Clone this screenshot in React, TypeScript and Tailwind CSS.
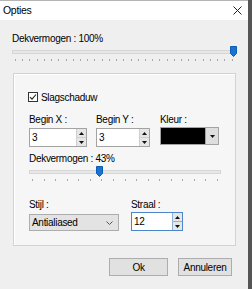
import React from "react";

function Thumb() {
  return (
    <svg width="7" height="11" viewBox="0 0 7 11" className="block">
      <path d="M0.5 0.5H6.5V7.5L3.5 10.5L0.5 7.5Z" fill="#1a73d1" stroke="#0b5cb3" strokeWidth="1" />
    </svg>
  );
}

function Ticks({ count }: { count: number }) {
  return (
    <div className="flex justify-between">
      {Array.from({ length: count }).map((_, i) => (
        <span key={i} className="block w-[1px] h-[2px] bg-[#a9a9a9]" />
      ))}
    </div>
  );
}

function Slider({ width, thumbLeft, ticks, tickPad }: { width: number; thumbLeft: number; ticks: number; tickPad: number }) {
  return (
    <div className="relative h-[17px]" style={{ width }}>
      <div className="mt-[3px] h-[4px] border border-[#d6d6d6] bg-[#e7e7e7]" />
      <div className="mt-[5px]" style={{ paddingLeft: tickPad, paddingRight: tickPad }}>
        <Ticks count={ticks} />
      </div>
      <div className="absolute top-[-1px]" style={{ left: thumbLeft }}>
        <Thumb />
      </div>
    </div>
  );
}

function SpinButtons({ bordered }: { bordered?: boolean }) {
  return (
    <div className={"flex flex-col w-[10px] h-full " + (bordered ? "border-l border-[#8fb2d8]" : "border-l border-[#cfcfcf]")}>
      <div className={"flex-1 flex items-center justify-center bg-[#e6e6e6] " + (bordered ? "border-b border-[#8fb2d8]" : "border-b border-[#cfcfcf]")}>
        <svg width="5" height="3" viewBox="0 0 5 3"><path d="M0 3L2.5 0L5 3Z" fill="#111" /></svg>
      </div>
      <div className="flex-1 flex items-center justify-center bg-[#e6e6e6]">
        <svg width="5" height="3" viewBox="0 0 5 3"><path d="M0 0L2.5 3L5 0Z" fill="#111" /></svg>
      </div>
    </div>
  );
}

function SpinInput({ value, width, focused }: { value: string; width: number; focused?: boolean }) {
  return (
    <div
      className={"flex h-[19px] bg-white border " + (focused ? "border-[#4a86c8]" : "border-[#a3a3a3]")}
      style={{ width }}
    >
      <div className="flex-1 pl-[2px] leading-[17px]">{value}</div>
      <SpinButtons bordered={focused} />
    </div>
  );
}

export default function App() {
  return (
    <div className="w-[252px] h-[289px] flex bg-[#efefef] border-r-[4px] border-[#555555] font-['Liberation_Sans',Arial,sans-serif] text-[10px] tracking-[-0.3px] text-black overflow-hidden">
      <div className="flex-1 flex flex-col">
        <div className="h-[20px] bg-white border-t border-[#b5b5b5] flex items-center justify-between pl-[3px] pr-[6px]">
          <span className="text-[10.5px]">Opties</span>
          <svg width="9" height="9" viewBox="0 0 9 9">
            <path d="M0.5 0.5L8.5 8.5M8.5 0.5L0.5 8.5" stroke="#222" strokeWidth="1" />
          </svg>
        </div>
        <div className="flex-1 flex flex-col pl-[12px] pt-[11px]">
          <div className="h-[16px] leading-[16px]">Dekvermogen : 100%</div>
          <Slider width={224} thumbLeft={218} ticks={31} tickPad={3} />
          <div className="mt-[9px] ml-[1px] w-[223px] h-[173px] border border-[#d3d3d3] bg-[#f6f6f6] shadow-[inset_1px_1px_0_#ffffff] pl-[15px] pt-[15px] flex flex-col">
            <div className="h-[16px] flex items-center ml-[-1px]">
              <div className="w-[10px] h-[10px] border border-[#333] bg-white flex items-center justify-center">
                <svg width="8" height="8" viewBox="0 0 8 8">
                  <path d="M1 4.2L3 6.2L7 1.5" fill="none" stroke="#222" strokeWidth="1.1" />
                </svg>
              </div>
              <span className="ml-[3px]">Slagschaduw</span>
            </div>
            <div className="mt-[7px] flex">
              <div className="flex flex-col w-[58px]">
                <div className="h-[16px] leading-[16px]">Begin X :</div>
                <SpinInput value="3" width={58} />
              </div>
              <div className="flex flex-col w-[54px] ml-[9px]">
                <div className="h-[16px] leading-[16px]">Begin Y :</div>
                <SpinInput value="3" width={54} />
              </div>
              <div className="flex flex-col w-[59px] ml-[10px]">
                <div className="h-[15px] leading-[15px]">Kleur :</div>
                <div className="flex h-[18px] border border-[#a3a3a3] bg-[#dedede]">
                  <div className="w-[45px] h-full bg-black border-r border-[#a3a3a3]" />
                  <div className="flex-1 flex items-center justify-center">
                    <svg width="5" height="3" viewBox="0 0 5 3"><path d="M0 0L2.5 3L5 0Z" fill="#111" /></svg>
                  </div>
                </div>
              </div>
            </div>
            <div className="mt-[4px] h-[16px] leading-[16px]">Dekvermogen : 43%</div>
            <Slider width={192} thumbLeft={67} ticks={17} tickPad={3} />
            <div className="mt-[13px] flex">
              <div className="flex flex-col w-[90px]">
                <div className="h-[16px] leading-[16px]">Stijl :</div>
                <div className="mt-[1px] h-[17px] border border-[#adadad] bg-[#e3e3e3] flex items-center justify-between pl-[2px] pr-[5px]">
                  <span>Antialiased</span>
                  <svg width="7" height="4" viewBox="0 0 7 4">
                    <path d="M0.5 0.5L3.5 3.5L6.5 0.5" fill="none" stroke="#555" strokeWidth="1" />
                  </svg>
                </div>
              </div>
              <div className="flex flex-col w-[52px] ml-[12px]">
                <div className="h-[15px] leading-[15px]">Straal :</div>
                <SpinInput value="12" width={52} focused />
              </div>
            </div>
          </div>
          <div className="mt-[12px] flex justify-end pr-[16px] gap-[10px]">
            <div className="w-[59px] h-[18px] border border-[#adadad] bg-[#e1e1e1] flex items-center justify-center">Ok</div>
            <div className="w-[54px] h-[18px] border border-[#adadad] bg-[#e1e1e1] flex items-center justify-center">Annuleren</div>
          </div>
        </div>
      </div>
    </div>
  );
}
